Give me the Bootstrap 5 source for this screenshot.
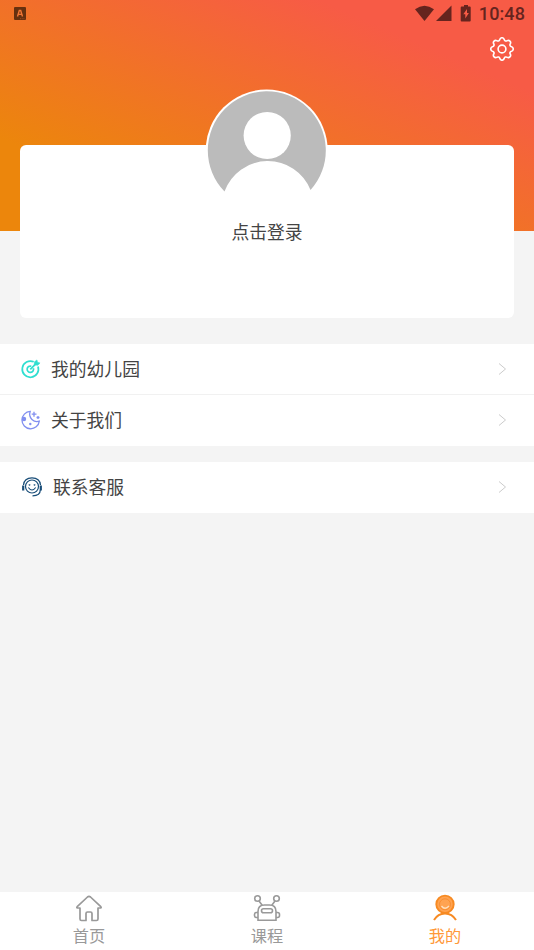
<!DOCTYPE html>
<html lang="zh-CN">
<head>
<meta charset="utf-8">
<meta name="viewport" content="width=device-width, initial-scale=1">
<title>我的</title>
<link href="https://cdn.jsdelivr.net/npm/bootstrap@5.3.0/dist/css/bootstrap.min.css" rel="stylesheet">
<style>
body{font-family:"Noto Sans CJK SC",sans-serif;background:#f4f4f4;color:#444;font-size:17.8px;line-height:26px;height:950px;overflow:hidden}
svg{display:block;flex:none}
.hero{height:231px;background:linear-gradient(to top right,#ec860c 20%,#f75b46 80%)}
.statusbar{height:27px;padding:0 9px 0 14px;color:#66241e}
.clock{font:500 18px/25px Roboto,sans-serif;letter-spacing:.1px;margin-left:7px}
.settings{padding:10px 20px 0 0}
.profile{margin:-86px 20px 26px;height:173px;border-radius:6px}
.avatar{margin-top:-56px}
.login{margin-top:7px}
.menu .list-group-item{height:51px;padding:0 27px 0 20px;border-color:#f1f1f1;color:#444}
.menu .list-group-item:last-child{height:50.500px}
.menu-label{margin-left:10px;padding-bottom:2px}
.contact .menu-label{margin-left:11px}
.contact{margin-top:16.500px}
.tabs{height:58.500px;font-size:16.2px;line-height:24px;color:#999}
.tabs a{color:#999;padding-top:2px}
.tabs a.current{color:#ff9838}
.tabs span{margin-top:1px}
</style>
</head>
<body class="d-flex flex-column">
<header class="hero flex-shrink-0">
  <div class="statusbar d-flex align-items-center">
    <svg width="12" height="13" viewBox="0 0 12 13"><rect width="12" height="13" rx="1" fill="#67300f"/><path d="M3.500 9.500 5.300 3.500h1.400L8.500 9.500M4.500 7.400h3" fill="none" stroke="#f27635" stroke-width="1.400"/><path d="M6 11.700h5" stroke="#b95427" stroke-width=".7" stroke-dasharray="1 .7"/></svg>
    <svg class="ms-auto" width="58" height="18" viewBox="0 0 58 18" fill="currentColor"><path d="M1 4.200Q10.500-2.800 20 4.200L10.500 16Z"/><path d="M37.500.500v15.500H22Z"/><path fill-rule="evenodd" d="M50 0h4v1.500h1.700q1 0 1 1V15.500q0 1-1 1h-8q-1 0-1-1V2.500q0-1 1-1H50ZM53 4l-3.700 5.200h2v4.300l3.600-5.600H53Z"/></svg>
    <span class="clock">10:48</span>
  </div>
  <div class="settings d-flex justify-content-end">
    <svg width="24" height="24" viewBox="-12 -12 24 24" fill="none" stroke="#fff" stroke-width="1.600"><path d="M-2.200-9.600A2.300 2.300 0 0 1 2.200-9.600A1.900 1.900 0 0 0 5.230-8.340A2.300 2.300 0 0 1 8.340-5.230A1.900 1.900 0 0 0 9.600-2.200A2.300 2.300 0 0 1 9.600 2.200A1.900 1.900 0 0 0 8.340 5.230A2.300 2.300 0 0 1 5.230 8.340A1.900 1.900 0 0 0 2.200 9.600A2.300 2.300 0 0 1-2.200 9.600A1.900 1.900 0 0 0-5.230 8.340A2.300 2.300 0 0 1-8.340 5.230A1.900 1.900 0 0 0-9.600 2.200A2.300 2.300 0 0 1-9.600-2.200A1.900 1.900 0 0 0-8.340-5.230A2.300 2.300 0 0 1-5.230-8.340A1.900 1.900 0 0 0-2.200-9.600Z"/><circle r="3.900"/></svg>
  </div>
</header>

<section class="profile bg-white d-flex flex-column align-items-center flex-shrink-0">
  <svg class="avatar" width="122" height="122" viewBox="0 0 122 122"><circle cx="60.700" cy="61.500" r="61" fill="#fff"/><path d="M18.500 102.500A59 59 0 1 1 104.500 101A46 46 0 0 0 18.500 102.500Z" fill="#bbb"/><circle cx="61.200" cy="46.500" r="23.600" fill="#fff"/></svg>
  <div class="login">点击登录</div>
</section>

<main class="flex-grow-1">
  <div class="menu list-group list-group-flush">
    <a href="#" class="list-group-item d-flex align-items-center">
      <svg width="21" height="20" viewBox="0 0 21 20" fill="none" stroke="#2fded0" stroke-width="1.700"><path d="M13.700 2.800A8.100 8.100 0 1 0 18 7.500M11.300 7.200A3.200 3.200 0 1 0 13.400 9.300M10.300 10.300 17 3.700"/><path d="m14.200 5.900.300-3.200L17 .900l.500 2.300 2.500.700-2.100 2.400Z" fill="#2fded0" stroke-width=".500"/></svg>
      <span class="menu-label">我的幼儿园</span>
      <svg class="ms-auto" width="9" height="14" viewBox="0 0 9 14" fill="none" stroke="#ccc"><path d="m1 1.500 6.500 5.500L1 12.500"/></svg>
    </a>
    <a href="#" class="list-group-item d-flex align-items-center">
      <svg width="21" height="20" viewBox="0 0 21 20" fill="none" stroke="#818ff0" stroke-width="1.300"><path d="M10.200 1.400A8.700 8.700 0 1 0 19.300 11.200C14 13 8 8 10.200 1.400Z"/><path d="M14 1.700v5M11.700 4.200h4.800M18 6v3M16.500 7.500h3"/><circle cx="4" cy="9" r="2.200" fill="#818ff0" stroke="none"/><circle cx="10.300" cy="14" r="1.200" fill="#818ff0" stroke="none"/></svg>
      <span class="menu-label">关于我们</span>
      <svg class="ms-auto" width="9" height="14" viewBox="0 0 9 14" fill="none" stroke="#ccc"><path d="m1 1.500 6.500 5.500L1 12.500"/></svg>
    </a>
  </div>
  <div class="menu contact list-group list-group-flush">
    <a href="#" class="list-group-item d-flex align-items-center">
      <svg width="22" height="20" viewBox="0 0 22 20" fill="none" stroke="#184d78" stroke-width="1.200"><path d="M3.500 8C4 3 8 .900 12 .900S20 3 20.500 8M20.300 13c0 3.500-3 5.800-7.800 5.800"/><circle cx="12" cy="9.500" r="6.500"/><path d="M8.300 10.500q3.700 5 7.400 0"/><circle cx="9.500" cy="7.800" r=".300"/><circle cx="14.500" cy="7.800" r=".300"/><path d="M3.200 8.500v5M20.800 8.500v5" stroke-width="2.200"/></svg>
      <span class="menu-label">联系客服</span>
      <svg class="ms-auto" width="9" height="14" viewBox="0 0 9 14" fill="none" stroke="#ccc"><path d="m1 1.500 6.500 5.500L1 12.500"/></svg>
    </a>
  </div>
</main>

<nav class="tabs bg-white row g-0 flex-shrink-0">
  <a href="#" class="col d-flex flex-column align-items-center text-decoration-none">
    <svg width="28" height="28" viewBox="0 0 28 28" fill="none" stroke="#999" stroke-width="1.700" stroke-linejoin="round"><path d="M5 14H2.500q-1.200-.200-.300-1.300L12.500 3q1.500-1.200 3 0l10.300 9.700q.900 1.100-.300 1.300H23v11q0 1.500-1.500 1.500H17v-7q0-1.500-1.500-1.500h-3Q11 18 11 19.500v7H6.500Q5 26.500 5 25Z"/></svg>
    <span>首页</span>
  </a>
  <a href="#" class="col d-flex flex-column align-items-center text-decoration-none">
    <svg width="28" height="28" viewBox="0 0 28 28" fill="none" stroke="#999" stroke-width="1.600"><circle cx="4.500" cy="4.500" r="2.800"/><circle cx="23.500" cy="4.500" r="2.800"/><path d="m6 7 3 4M22 7l-3 4M5 26.200V17.500q0-6.500 6.500-6.500h5Q23 11 23 17.500v8.700ZM5 18.500H3.500Q1.500 18.500 1.500 20.500v1q0 2 2 2H5M23 18.500h1.500q2 0 2 2v1q0 2-2 2H23"/><rect x="8.500" y="14.800" width="11" height="4" rx="2"/></svg>
    <span>课程</span>
  </a>
  <a href="#" class="col current d-flex flex-column align-items-center text-decoration-none" aria-current="page">
    <svg width="28" height="28" viewBox="0 0 28 28" fill="none" stroke="#f78a22" stroke-width="1.900"><circle cx="14" cy="10.300" r="8.700" fill="#ffa351"/><circle cx="14" cy="10.300" r="5.500" stroke="#f98f31" stroke-width="1"/><path d="M10.500 12q3.500 4.500 7.500 0" stroke="#ffe0bd" stroke-width="1.300"/><path d="M3 26C6 21 10 19.500 14 19.500s8 1.500 11 6.500" stroke-width="2"/></svg>
    <span>我的</span>
  </a>
</nav>
<script src="https://cdn.jsdelivr.net/npm/bootstrap@5.3.0/dist/js/bootstrap.bundle.min.js"></script>
</body>
</html>
